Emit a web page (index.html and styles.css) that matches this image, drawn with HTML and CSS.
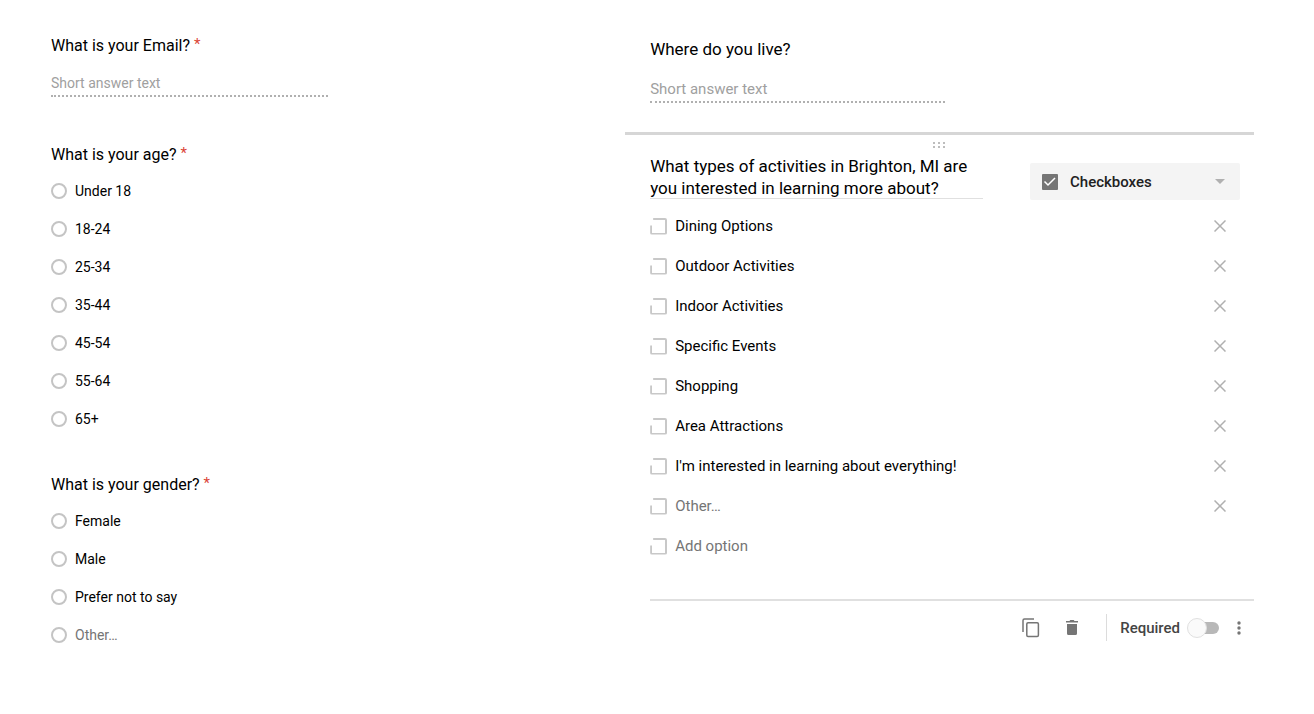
FILE: index.html
```html
<!DOCTYPE html>
<html lang="en">
<head>
  <meta charset="UTF-8" />
  <meta name="viewport" content="width=device-width, initial-scale=1.0"/>
  <title>Survey Form</title>
  <link rel="stylesheet" href="styles.css">
</head>
<body>

  <div class="form-page">

    <section class="left-column">
      <div class="question">
        <label class="question-title" for="email">What is your Email? <span class="star">*</span></label>
        <input class="short-answer" type="text" id="email" placeholder="Short answer text" />
      </div>

      <fieldset class="question">
        <legend class="question-title">What is your age? <span class="star">*</span></legend>
        <label class="radio-row"><input type="radio" name="age" />Under 18</label>
        <label class="radio-row"><input type="radio" name="age" />18-24</label>
        <label class="radio-row"><input type="radio" name="age" />25-34</label>
        <label class="radio-row"><input type="radio" name="age" />35-44</label>
        <label class="radio-row"><input type="radio" name="age" />45-54</label>
        <label class="radio-row"><input type="radio" name="age" />55-64</label>
        <label class="radio-row"><input type="radio" name="age" />65+</label>
      </fieldset>

      <fieldset class="question">
        <legend class="question-title">What is your gender? <span class="star">*</span></legend>
        <label class="radio-row"><input type="radio" name="gender" />Female</label>
        <label class="radio-row"><input type="radio" name="gender" />Male</label>
        <label class="radio-row"><input type="radio" name="gender" />Prefer not to say</label>
        <label class="radio-row muted"><input type="radio" name="gender" />Other…</label>
      </fieldset>
    </section>

    <section class="right-column">
      <div class="live-question">
        <label class="question-title" for="live">Where do you live?</label>
        <input class="short-answer" type="text" id="live" placeholder="Short answer text" />
      </div>

      <div class="editor">
        <svg class="drag-handle" width="14" height="8" viewBox="0 0 14 8" fill="#bdbdbd">
          <rect x="1" y="0" width="2" height="2"/><rect x="6" y="0" width="2" height="2"/><rect x="11" y="0" width="2" height="2"/>
          <rect x="1" y="4" width="2" height="2"/><rect x="6" y="4" width="2" height="2"/><rect x="11" y="4" width="2" height="2"/>
        </svg>

        <div class="editor-head">
          <textarea class="question-text" rows="2" aria-label="Question">What types of activities in Brighton, MI are you interested in learning more about?</textarea>
          <div class="type-picker">
            <svg width="16" height="16" viewBox="0 0 16 16">
              <rect width="16" height="16" rx="1" fill="#757575"/>
              <path d="M2.500 7.500l3.500 3.500L13 4" fill="none" stroke="#fff" stroke-width="1.500"/>
            </svg>
            <select aria-label="Question type">
              <option>Checkboxes</option>
              <option>Multiple choice</option>
              <option>Short answer</option>
            </select>
            <svg class="caret" width="10" height="5" viewBox="0 0 10 5"><path d="M0 0h10L5 5z" fill="#b0b0b0"/></svg>
          </div>
        </div>

        <ul class="option-list">
          <li>
            <label><input type="checkbox" />Dining Options</label>
            <button class="remove" aria-label="Remove"><svg width="12" height="12" viewBox="0 0 12 12"><path d="M.5.5l11 11M11.500.5l-11 11"/></svg></button>
          </li>
          <li>
            <label><input type="checkbox" />Outdoor Activities</label>
            <button class="remove" aria-label="Remove"><svg width="12" height="12" viewBox="0 0 12 12"><path d="M.5.5l11 11M11.500.5l-11 11"/></svg></button>
          </li>
          <li>
            <label><input type="checkbox" />Indoor Activities</label>
            <button class="remove" aria-label="Remove"><svg width="12" height="12" viewBox="0 0 12 12"><path d="M.5.5l11 11M11.500.5l-11 11"/></svg></button>
          </li>
          <li>
            <label><input type="checkbox" />Specific Events</label>
            <button class="remove" aria-label="Remove"><svg width="12" height="12" viewBox="0 0 12 12"><path d="M.5.5l11 11M11.500.5l-11 11"/></svg></button>
          </li>
          <li>
            <label><input type="checkbox" />Shopping</label>
            <button class="remove" aria-label="Remove"><svg width="12" height="12" viewBox="0 0 12 12"><path d="M.5.5l11 11M11.500.5l-11 11"/></svg></button>
          </li>
          <li>
            <label><input type="checkbox" />Area Attractions</label>
            <button class="remove" aria-label="Remove"><svg width="12" height="12" viewBox="0 0 12 12"><path d="M.5.5l11 11M11.500.5l-11 11"/></svg></button>
          </li>
          <li>
            <label><input type="checkbox" />I'm interested in learning about everything!</label>
            <button class="remove" aria-label="Remove"><svg width="12" height="12" viewBox="0 0 12 12"><path d="M.5.5l11 11M11.500.5l-11 11"/></svg></button>
          </li>
          <li class="muted">
            <label><input type="checkbox" />Other…</label>
            <button class="remove" aria-label="Remove"><svg width="12" height="12" viewBox="0 0 12 12"><path d="M.5.5l11 11M11.500.5l-11 11"/></svg></button>
          </li>
          <li class="muted">
            <label><input type="checkbox" />Add option</label>
          </li>
        </ul>

        <div class="editor-footer">
          <button class="icon-btn" aria-label="Duplicate">
            <svg width="18" height="20" viewBox="0 0 18 20" fill="none" stroke="#757575" stroke-width="1.500">
              <path d="M1 14V2.500Q1 1 2.500 1H12"/>
              <rect x="4.800" y="4.800" width="11.600" height="13.600" rx="1.200"/>
            </svg>
          </button>
          <button class="icon-btn" aria-label="Delete">
            <svg width="12" height="16" viewBox="0 0 12 16" fill="#757575">
              <path d="M0 1h3.500l.8-1h3.400l.8 1H12v1.500H0zM1 4h10v9.500Q11 15 9.500 15h-7Q1 15 1 13.500z"/>
            </svg>
          </button>
          <label class="required">Required<input type="checkbox" class="toggle" /></label>
          <button class="icon-btn more" aria-label="More options">
            <svg width="4" height="14" viewBox="0 0 4 14" fill="#757575">
              <circle cx="2" cy="2" r="1.700"/><circle cx="2" cy="7" r="1.700"/><circle cx="2" cy="12" r="1.700"/>
            </svg>
          </button>
        </div>
      </div>
    </section>

  </div>

</body>
</html>
```
FILE: styles.css
```css
* {
  box-sizing: border-box;
}

body {
  font-family: Roboto, sans-serif;
  font-size: 14px;
  color: #000;
  background: #fff;
  margin: 0;
}

input,
select,
textarea,
button {
  font-family: inherit;
  margin: 0;
}

button {
  background: none;
  border: none;
  padding: 0;
  cursor: pointer;
}

svg {
  display: block;
}

.form-page {
  display: grid;
  grid-template-columns: 21fr 23fr;
  padding: 34px 60px 34px 51px;
}

.question {
  border: none;
  margin: 0 0 35px;
  padding: 0;
}

.question-title {
  display: block;
  padding: 0;
  margin-bottom: 5px;
  font-size: 16px;
  line-height: 24px;
}

.star {
  color: #db4437;
  font-size: 15px;
  line-height: 1;
  vertical-align: 2px;
}

.short-answer {
  display: block;
  width: 277px;
  height: 29px;
  padding: 2px 0 0;
  margin: 10px 0 46px;
  border: none;
  border-bottom: 2px dotted #b0b0b0;
  font-size: 14px;
  outline: none;
}

.short-answer::placeholder {
  color: #a0a0a0;
}

.radio-row {
  display: flex;
  align-items: center;
  gap: 8px;
  height: 38px;
}

.radio-row input {
  appearance: none;
  width: 16px;
  height: 16px;
  border: 2px solid #c4c4c4;
  border-radius: 50%;
}

.radio-row input:checked {
  background: #757575;
}

.muted {
  color: #757575;
}

/* right side */
.live-question {
  padding: 3px 0 0 25px;
}

.live-question .question-title {
  font-size: 17px;
}

.live-question .short-answer {
  width: 295px;
  margin: 13px 0 29px;
  font-size: 15px;
}

.editor {
  border-top: 3px solid #d6d6d6;
  padding: 7px 0 0 25px;
}

.drag-handle {
  margin: 0 auto;
  position: relative;
  left: -13px;
}

.editor-head {
  display: flex;
  justify-content: space-between;
  align-items: flex-start;
  padding: 5px 14px 0 0;
}

.question-text {
  width: 333px;
  height: 44px;
  padding: 0;
  border: none;
  border-bottom: 1px solid #e0e0e0;
  font-size: 17px;
  line-height: 22px;
  color: #000;
  resize: none;
  overflow: hidden;
  outline: none;
}

.type-picker {
  display: flex;
  align-items: center;
  width: 210px;
  height: 37px;
  margin-top: 8px;
  padding: 0 15px 0 12px;
  background: #f4f4f4;
  border-radius: 2px;
}

.type-picker select {
  appearance: none;
  flex: 1;
  border: none;
  background: none;
  padding: 0 0 0 12px;
  font-size: 15px;
  font-weight: 500;
  color: #212121;
}

.option-list {
  list-style: none;
  margin: 6px 0 0;
  padding: 0 28px 0 0;
  font-size: 15px;
}

.option-list li {
  display: flex;
  align-items: center;
  justify-content: space-between;
  height: 40px;
}

.option-list label {
  display: flex;
  align-items: center;
  gap: 8px;
}

/* box is open at its top left corner */
.option-list input {
  appearance: none;
  width: 17px;
  height: 17px;
  border: 2px solid #c8c8c8;
  border-radius: 2px;
  clip-path: polygon(3px 0, 100% 0, 100% 100%, 0 100%, 0 8px, 3px 8px);
}

.option-list input:checked {
  background: #757575;
}

.remove path {
  fill: none;
  stroke: #b0b0b0;
  stroke-width: 1.5;
}

.editor-footer {
  display: flex;
  align-items: center;
  justify-content: flex-end;
  gap: 26px;
  margin-top: 33px;
  padding: 13px 13px 0 0;
  border-top: 2px solid #e0e0e0;
}

.required {
  display: flex;
  align-items: center;
  gap: 7px;
  height: 27px;
  margin-left: 2px;
  padding-left: 13px;
  border-left: 1px solid #dcdcdc;
  font-size: 15px;
  font-weight: 500;
  color: #444;
}

.toggle {
  appearance: none;
  display: flex;
  align-items: center;
  width: 32px;
  height: 12px;
  border-radius: 6px;
  background: linear-gradient(to right, transparent 9px, #b8b8b8 9px);
}

.toggle::before {
  content: "";
  width: 18px;
  height: 18px;
  flex-shrink: 0;
  border-radius: 50%;
  border: 1px solid #e0e0e0;
  background: #fafafa;
}

.toggle:checked {
  justify-content: flex-end;
}

.more {
  margin-left: -8px;
}
```
